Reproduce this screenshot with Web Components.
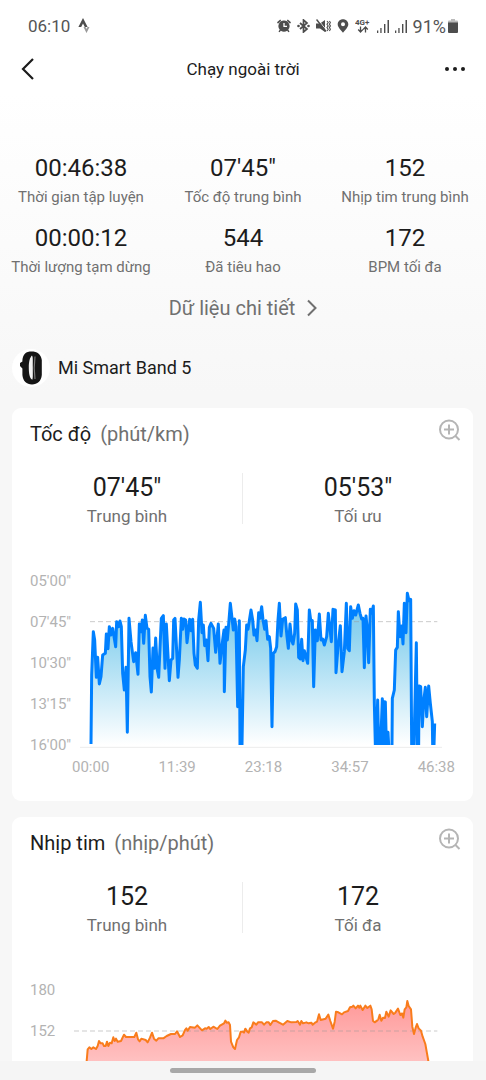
<!DOCTYPE html>
<html lang="vi">
<head>
<meta charset="utf-8">
<meta name="viewport" content="width=device-width, initial-scale=1">
<title>Chạy ngoài trời</title>
<style>
  html, body { margin: 0; height: 100%; }
  body { font-family: Roboto, "Noto Sans", sans-serif; color: #1c1c1c; background: #f7f7f7; }
</style>
</head>
<body>
<run-screen>
  <status-bar slot="top"></status-bar>
  <top-bar slot="top">Chạy ngoài trời</top-bar>
  <run-summary>
    <stat-item>00:46:38<span slot="label">Thời gian tập luyện</span></stat-item>
    <stat-item>07'45"<span slot="label">Tốc độ trung bình</span></stat-item>
    <stat-item>152<span slot="label">Nhịp tim trung bình</span></stat-item>
    <stat-item>00:00:12<span slot="label">Thời lượng tạm dừng</span></stat-item>
    <stat-item>544<span slot="label">Đã tiêu hao</span></stat-item>
    <stat-item>172<span slot="label">BPM tối đa</span></stat-item>
  </run-summary>
  <detail-link>Dữ liệu chi tiết</detail-link>
  <device-row>Mi Smart Band 5</device-row>
  <metric-card>
    <span slot="title">Tốc độ</span><span slot="unit">(phút/km)</span>
    <stat-item slot="stat" size="large">07'45"<span slot="label">Trung bình</span></stat-item>
    <stat-item slot="stat" size="large">05'53"<span slot="label">Tối ưu</span></stat-item>
    <line-chart kind="pace" y-labels="05'00&quot;,07'45&quot;,10'30&quot;,13'15&quot;,16'00&quot;" x-labels="00:00,11:39,23:18,34:57,46:38"></line-chart>
  </metric-card>
  <metric-card>
    <span slot="title">Nhịp tim</span><span slot="unit">(nhịp/phút)</span>
    <stat-item slot="stat" size="large">152<span slot="label">Trung bình</span></stat-item>
    <stat-item slot="stat" size="large">172<span slot="label">Tối đa</span></stat-item>
    <line-chart kind="heart" y-labels="180,152"></line-chart>
  </metric-card>
  <home-bar slot="bottom"></home-bar>
</run-screen>

<script>
function element(name, html, setup) {
  const template = document.createElement('template');
  template.innerHTML = html;
  customElements.define(name, class extends HTMLElement {
    constructor() {
      super();
      this.attachShadow({ mode: 'open' }).append(template.content.cloneNode(true));
    }
    connectedCallback() { if (setup) setup(this, this.shadowRoot); }
  });
}

element('run-screen', `
  <style>
    :host { display: flex; flex-direction: column; height: 100vh; }
    main { flex: 1; min-height: 0; overflow-y: auto; scrollbar-width: none;
      background: linear-gradient(#fff, #f7f7f7 300px); }
  </style>
  <slot name="top"></slot>
  <main><slot></slot></main>
  <slot name="bottom"></slot>`);

element('status-bar', `
  <style>
    :host { display: flex; align-items: center; justify-content: space-between; height: 36px;
      padding: 8px 28px 0 28px; background: #fff; color: #555; font-size: 18px; }
    div { display: flex; align-items: center; }
    svg { display: block; fill: #4d4d4d; }
    .left { gap: 8px; font-size: 17px; }
    .right { gap: 6px; }
    .battery { display: flex; align-items: center; gap: 2px; }
  </style>
  <div class="left"><span>06:10</span>
    <svg width="12" height="16" viewBox="0 0 12 16"><path d="M5 0 9.600 9H6.800L5 5.600 3.200 9H.4z"/><path fill="#999" d="M5.500 9h2l1 2 1-2H11.500L8.500 15z"/></svg>
  </div>
  <div class="right">
    <svg width="14" height="14" viewBox="0 0 14 14"><path d="M7 1.500a5.500 5.500 0 0 1 4.300 9l1.200 2.200-1.100.6-1.200-1.600a5.500 5.500 0 0 1-6.400 0l-1.200 1.600-1.100-.6 1.200-2.200A5.500 5.500 0 0 1 7 1.500zM3.200.5l1 1L1 4.700l-1-1.500zM10.800.5l-1 1L13 4.700l1-1.500z"/><path d="M7 4v3.400h3" fill="none" stroke="#fff" stroke-width="1.300"/></svg>
    <svg width="13" height="14" viewBox="0 0 13 14"><path d="M3 4l7 6-3.500 3V1L10 4l-7 6" fill="none" stroke="#4d4d4d" stroke-width="1.700"/><circle cx="1.500" cy="7" r="1.300"/><circle cx="11.500" cy="7" r="1.300"/></svg>
    <svg width="15" height="14" viewBox="0 0 15 14"><path d="M0 4.500h4L9 1v12L4 9.500H0z"/><path d="M1.500 0 11 12" stroke="#fff" stroke-width="1"/><path d="M.5 .5 10 12.500" fill="none" stroke="#4d4d4d" stroke-width="1.500"/><path d="M11 2l1.200 1.500L11 5.200l1.200 1.700L11 8.600l1.200 1.700L11 12M13.400 2l1 1.500-1 1.700 1 1.700-1 1.700 1 1.700-1 1.700" fill="none" stroke="#4d4d4d" stroke-width="1.100"/></svg>
    <svg width="12" height="14" viewBox="1 0 12 14"><path fill-rule="evenodd" d="M7 .3c3 0 5.300 2.200 5.300 5C12.300 8.500 9 11 7 13.700 5 11 1.700 8.500 1.700 5.300 1.700 2.500 4 .3 7 .3zM7 3.200a2 2 0 1 0 0 4 2 2 0 0 0 0-4z"/></svg>
    <svg width="16" height="16" viewBox="0 0 16 16"><text x="0" y="7" font-family="Roboto, sans-serif" font-size="8" font-weight="700">4G+</text><path d="M5.500 8.500v5M3.200 11.500l2.300 2.500 2.300-2.500M10.500 14.500v-5M8.200 11.500 10.500 9l2.300 2.500" fill="none" stroke="#4d4d4d" stroke-width="1.300"/></svg>
    <svg width="12" height="14" viewBox="0 0 12 14"><path d="M0 11.500h1.300V14H0zM3.300 9h1.300v5H3.300zM7 5h1.400v9H7zM10.500 1H12v13h-1.500z"/></svg>
    <svg width="12" height="14" viewBox="0 0 12 14"><path d="M0 11.500h1.300V14H0zM3.300 9h1.300v5H3.300zM7 5h1.400v9H7zM10.500 1H12v13h-1.500z"/></svg>
    <div class="battery"><span>91%</span>
    <svg width="10" height="14" viewBox="0 0 10 14"><path fill="#bbb" d="M3 0h4v1.500h2q1 0 1 1V5H0V2.500q0-1 1-1h2z"/><path d="M0 3.500h10V13q0 1-1 1H1q-1 0-1-1z"/></svg></div>
  </div>`);

element('top-bar', `
  <style>
    :host { display: grid; grid-template-columns: 60px 1fr 60px; align-items: center; height: 50px; background: #fff; }
    button { display: flex; height: 40px; padding: 0; border: 0; background: none; align-items: center; }
    .more { justify-content: flex-end; padding-right: 21px; }
    .back { padding-left: 21px; }
    h1 { margin: 0; text-align: center; font-size: 17px; line-height: 24px; font-weight: 400; }
  </style>
  <button class="back" aria-label="Quay lại"><svg width="14" height="22" viewBox="0 0 14 22"><path d="M12 1 2 11l10 10" fill="none" stroke="#1c1c1c" stroke-width="2.200"/></svg></button>
  <h1><slot></slot></h1>
  <button class="more" aria-label="Thêm"><svg width="20" height="4" viewBox="0 0 20 4" fill="#1c1c1c"><circle cx="2" cy="2" r="2"/><circle cx="10" cy="2" r="2"/><circle cx="18" cy="2" r="2"/></svg></button>`);

element('stat-item', `
  <style>
    :host { display: flex; flex-direction: column; align-items: center; gap: 4px; white-space: nowrap;
      font-size: 24px; line-height: 30px; }
    :host([size=large]) { font-size: 25px; gap: 3px; }
    .label { font-size: 15px; line-height: 20px; color: #707070; }
    :host([size=large]) .label { font-size: 17px; }
  </style>
  <span><slot></slot></span>
  <span class="label"><slot name="label"></slot></span>`);

element('run-summary', `
  <style>
    :host { display: grid; grid-template-columns: repeat(3, 1fr); row-gap: 16px; padding-top: 59px; }
  </style>
  <slot></slot>`);

element('detail-link', `
  <style>
    :host { display: flex; justify-content: center; padding: 19px 0 29px; }
    a { display: flex; align-items: center; gap: 12px; color: #707070; text-decoration: none; font-size: 20px; line-height: 24px; }
  </style>
  <a href="#detail"><slot></slot><svg width="10" height="18" viewBox="0 0 10 18"><path d="M1 1.500 8.500 9 1 16.500" fill="none" stroke="#707070" stroke-width="2"/></svg></a>`);

element('device-row', `
  <style>
    :host { display: flex; align-items: center; gap: 8px; padding: 0 12px 21px; font-size: 18px; line-height: 24px; }
    svg { display: block; }
  </style>
  <svg width="38" height="38" viewBox="0 0 38 38"><circle cx="19" cy="19" r="19" fill="#fff"/>
    <path fill="#151515" d="M19.500 2.500c5.500 0 9.500 2.500 10.300 8.500v15c-.6 6-4.300 9.500-9.800 9.500s-9-3.500-9.600-9.500v-6.500L8 17v-3l2.400-1.500V11c.6-6 3.600-8.500 9.100-8.500z"/>
    <path fill="#f2f2f2" d="M20 6.500c-2.200 2-3.200 6-3.200 12.300s1 10.500 3.400 12c.9-1 .6-4 .6-12s.3-10.800-.8-12.300z"/>
    <path d="M23 7.500c-1 7-1 15.500 0 22.500" fill="none" stroke="#777" stroke-width="1.200"/></svg>
  <slot></slot>`);

element('metric-card', `
  <style>
    :host { display: block; margin: 0 13px 16px 12px; padding: 0 18px 24px; border-radius: 9px; background: #fff; }
    header { display: flex; align-items: center; justify-content: space-between; height: 52px; margin-bottom: 13px; }
    h2 { display: flex; gap: 9px; margin: 0; font-size: 20px; line-height: 24px; font-weight: 400; }
    .unit { color: #707070; }
    button { padding: 0; margin: 0 -7px 8px 0; border: 0; background: none; line-height: 0; }
    .stats { display: grid; grid-template-columns: 1fr 1px 1fr; margin: 0 -18px 45px; }
    .stats::before { content: ""; grid-column: 2; grid-row: 1; background: #ececec; height: 51px; }
    ::slotted(stat-item) { grid-row: 1; }
  </style>
  <header><h2><slot name="title"></slot><span class="unit"><slot name="unit"></slot></span></h2>
    <button aria-label="Phóng to"><svg width="24" height="24" viewBox="0 0 24 24" fill="none" stroke="#b5b5b5" stroke-width="2"><circle cx="11" cy="11.500" r="9"/><path d="M11 6.500v10M6 11.500h10M17.500 18l4 4"/></svg></button></header>
  <div class="stats"><slot name="stat"></slot></div>
  <slot></slot>`);

/* Each series is a list of stretches: [x shift, y shift, "x,y x,y ..."]. A "/" lifts the pen. */
const SERIES = {
  pace: {
    width: 1086, base: 495, mean: 'M30 125H1072', line: '#0080ff',
    stops: [['0', '#7cc8ea'], ['0.25', '#8ed3ef'], ['1', '#ffffff']],
    data: [
      [-180, -60, '213,552 215,345 220,215 224,240 229,352 233,292 238,372 243,350 248,285 256,280 259,222 264,266 268,200 273,225 278,205 287,260 290,185 296,200 300,183 304,200 308,340 313,390 318,322 322,517 327,175 333,245 341,305 347,278 354,343 358,192 363,215 367,180 371,250 376,166 381,205 386,208 390,350 394,396 399,264 403,325 407,234 412,330 416,352'],
      [240, -30, '4,145 10,137 15,295 19,162 28,332 33,270 38,265 41,150 45,145 54,322 58,270 64,145 68,178 72,147 77,150 81,218 89,148 93,182 98,148 102,250 106,285 112,295 116,150 121,97 126,188 130,165 134,227 139,210 144,272 148,172 153,160 161,175 167,247 175,162 180,280 188,210 192,180 193,365 198,172 202,210 207,150 211,100 220,180 224,147 228,170 233,410 238,152 240,525 246,525 250,290 256,240 260,165 264,178 273,120 278,150 282,195 287,180 291,212 296,128 300,145 305,110 309,150 314,178 318,152 323,208 328,200 332,235 336,470 340,250 345,245 350,230 354,150 358,100 363,198 368,148 376,143 381,200 385,235 390,162 395,212 399,222 404,190 407,102 412,120 416,262 421,267 425,208 429,272 433,242 443,280 448,120'],
      [690, -30, '2,150 7,152 11,350 16,180 22,212 28,132 33,210 38,207 43,225 50,200 55,130 64,215 69,118 76,120 78,308 84,230 91,167 96,305 103,245 109,100 113,235 118,242 122,110 127,145 132,122 137,135 145,105 150,130 155,147 159,145 163,293 168,138 172,180 176,278 181,118 185,130 190,108 193,400 196,525 199,525 203,390 206,525 212,525 217,386 220,525 222,395 226,396 229,525 234,487 236,525 / 246,525 247,385 253,360 257,240 262,232 265,125 270,200 275,168 279,222 283,100 288,188 292,70 297,92 302,88 305,525 312,525 319,218 322,525 326,525 327,348 332,350 337,470 341,395 346,352 350,440 356,348 361,400 367,455 368,525 372,525 374,460']
    ]
  },
  heart: {
    width: 1140, base: 504, mean: 'M36 126H1126', line: '#f97c1c',
    stops: [['0', '#ff9c9c'], ['1', '#ffffff']],
    data: [
      [-186, -87, '258,420 260,303 263,268 268,262 274,267 280,262 288,267 293,258 297,243 302,250 308,250 312,258 317,258 321,245 325,258 330,248 335,250 340,232 344,243 348,236 353,245 363,243 372,224 378,231 403,231 409,218 414,238 419,244 424,236 437,240 443,247 450,233 456,218 462,236 469,242 475,235 490,235 500,228 513,222 525,222 531,214 540,231 548,226 555,210 559,205 563,212 570,201 585,203 592,196 606,211 615,205 620,206 626,201 631,207 640,200 652,207 660,197 672,190 676,182 680,188 686,187 690,195 693,245 700,262 705,267 711,240 717,232 722,215'],
      [543, -87, '0,215 3,218 7,206 13,215 17,218 21,205 26,202 31,187 35,190 40,194 45,187 57,187 63,194 70,187 77,187 82,195 90,183 98,182 107,187 120,194 133,183 145,187 160,186 164,183 171,194 175,183 180,190 190,187 197,190 205,188 209,194 216,188 222,185 228,163 233,180 248,176 256,164 262,183 270,206 275,185 279,155 286,157 297,163 303,157 315,153 321,142 328,140 331,137 338,145 345,137 349,143 352,137 359,150 367,137 373,144 382,137 386,148 390,183 395,187 403,181 406,178 410,164 415,182 420,173 426,174 430,155 437,170 443,151 452,162 457,158 465,146 472,165 477,160 481,173 485,148 490,142 493,123 497,138 504,148 508,200 513,222 518,203 522,192 527,205 534,212 539,230 547,252 552,280 556,303 562,400']
    ]
  }
};

function strokes(series) {
  const runs = [[]];
  for (const [dx, dy, text] of series.data)
    for (const pair of text.split(' ')) {
      if (pair === '/') { runs.push([]); continue; }
      const [x, y] = pair.split(',').map(Number);
      runs[runs.length - 1].push([x + dx, Math.min(y + dy, series.base)]);
    }
  return runs;
}

element('line-chart', `
  <style>
    :host { display: block; color: #b3b3b3; font-size: 15px; line-height: 20px; }
    .plot { display: flex; align-items: flex-start; }
    .y { display: grid; gap: 21px; width: 50px; }
    :host([kind=heart]) .y { width: 32px; }
    svg { flex: 1; min-width: 0; height: 168px; margin: 9px 13px 7px 0; }
    .x { display: flex; justify-content: space-between; margin-left: 42px; padding-top: 2px; }
    path { vector-effect: non-scaling-stroke; }
  </style>
  <div class="plot"><div class="y"></div><svg preserveAspectRatio="none" role="img"></svg></div>
  <div class="x"></div>`,
  (host, root) => {
    const fill = (selector, list) => root.querySelector(selector).replaceChildren(
      ...(list ? list.split(',') : []).map(text => Object.assign(document.createElement('span'), { textContent: text })));
    fill('.y', host.getAttribute('y-labels'));
    fill('.x', host.getAttribute('x-labels'));
    const series = SERIES[host.getAttribute('kind')];
    const runs = strokes(series);
    const line = runs.map(run => 'M' + run.join('L')).join('');
    const area = runs.map(run => `M${run[0][0]},${series.base}L${run.join('L')}L${run[run.length - 1][0]},${series.base}Z`).join('');
    const svg = root.querySelector('svg');
    svg.setAttribute('viewBox', `0 0 ${series.width} 504`);
    svg.innerHTML = `
      <linearGradient id="g" gradientUnits="userSpaceOnUse" x1="0" y1="50" x2="0" y2="495">
        ${series.stops.map(([at, color]) => `<stop offset="${at}" stop-color="${color}"/>`).join('')}
      </linearGradient>
      <clipPath id="c"><path d="M0 0H${series.width}V${series.base}H0z"/></clipPath>
      <path d="M0 502H${series.width}" stroke="#ececec"/>
      <path d="${area}" fill="url(#g)"/>
      <path d="${series.mean}" stroke="#999" stroke-opacity="0.5" stroke-dasharray="5 3"/>
      <path d="${line}" fill="none" stroke="${series.line}" stroke-width="${host.getAttribute('kind') === 'heart' ? 2 : 3}" stroke-linejoin="round" clip-path="url(#c)"/>`;
  });

element('home-bar', `
  <style>
    :host { display: flex; align-items: center; justify-content: center; height: 19px; background: #f5f5f5; }
    i { width: 30%; height: 5px; border-radius: 3px; background: #a8a8a8; }
  </style>
  <i></i>`);
</script>
</body>
</html>
